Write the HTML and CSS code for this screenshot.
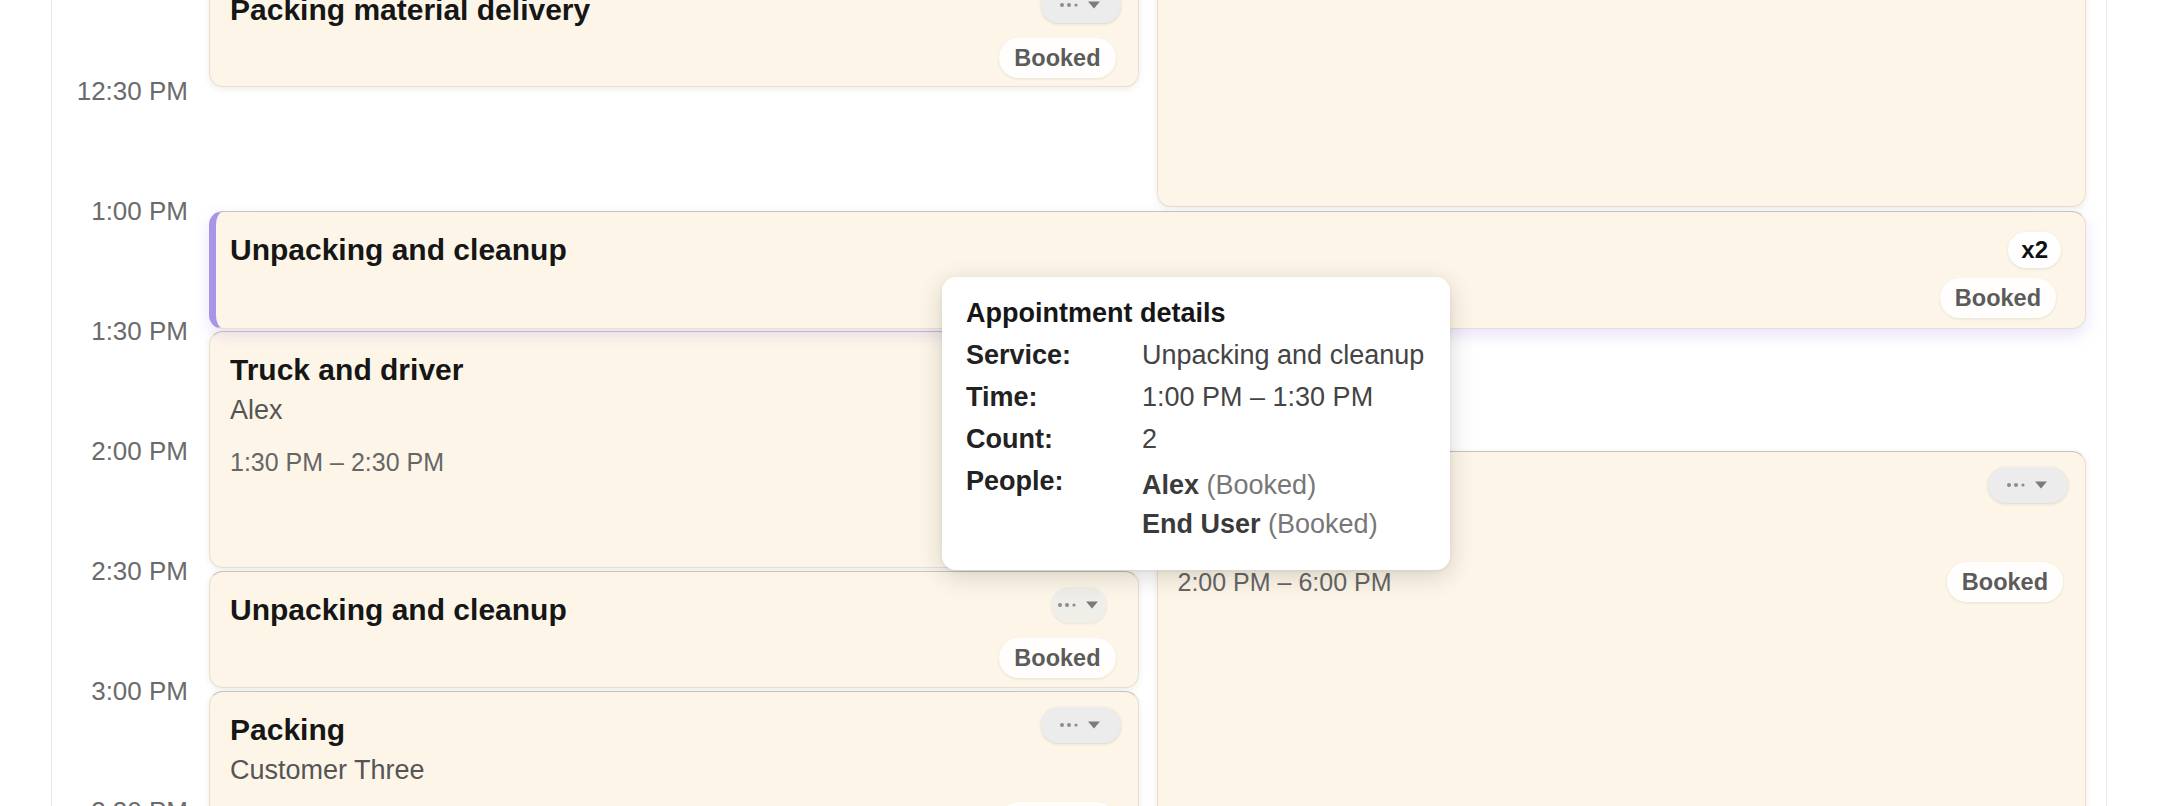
FILE: index.html
```html
<!DOCTYPE html>
<html lang="en">
<head>
<meta charset="utf-8">
<title>Day schedule</title>
<link rel="stylesheet" href="styles.css">
</head>
<body>
<div class="page">
  <div class="day">
    <div class="gutter">
      <div class="slot-label">11:30 AM</div>
      <div class="slot-label">12:00 PM</div>
      <div class="slot-label">12:30 PM</div>
      <div class="slot-label">1:00 PM</div>
      <div class="slot-label">1:30 PM</div>
      <div class="slot-label">2:00 PM</div>
      <div class="slot-label">2:30 PM</div>
      <div class="slot-label">3:00 PM</div>
      <div class="slot-label">3:30 PM</div>
    </div>
    <div class="events">
      <div class="event col-right" style="top:0px;height:356px"></div>

      <div class="event col-left" style="top:120px;height:116px">
        <div class="ev-head">
          <span class="ev-title">Packing material delivery</span>
          <button class="menu" type="button"><svg class="menu-icon" viewBox="0 0 44 12" width="44" height="12"><circle cx="3" cy="6" r="2"/><circle cx="10" cy="6" r="2"/><circle cx="17" cy="6" r="1.6"/><path class="caret" d="M29 2.5h12l-6 7z"/></svg></button>
        </div>
        <div class="ev-foot end"><span class="status">Booked</span></div>
      </div>

      <div class="event col-full accent" style="top:360px;height:118px">
        <div class="ev-head">
          <span class="ev-title">Unpacking and cleanup</span>
          <span class="count">x2</span>
        </div>
        <div class="ev-foot end"><span class="status">Booked</span></div>
      </div>

      <div class="event col-left" style="top:480px;height:237px">
        <div class="ev-head">
          <span class="ev-title">Truck and driver</span>
          <button class="menu" type="button"><svg class="menu-icon" viewBox="0 0 44 12" width="44" height="12"><circle cx="3" cy="6" r="2"/><circle cx="10" cy="6" r="2"/><circle cx="17" cy="6" r="1.6"/><path class="caret" d="M29 2.5h12l-6 7z"/></svg></button>
        </div>
        <div class="ev-sub">Alex</div>
        <div class="ev-foot"><span class="ev-time">1:30 PM – 2:30 PM</span><span class="status">Booked</span></div>
      </div>

      <div class="event col-right" style="top:600px;height:957px">
        <div class="ev-head end">
          <button class="menu" type="button"><svg class="menu-icon" viewBox="0 0 44 12" width="44" height="12"><circle cx="3" cy="6" r="2"/><circle cx="10" cy="6" r="2"/><circle cx="17" cy="6" r="1.6"/><path class="caret" d="M29 2.5h12l-6 7z"/></svg></button>
        </div>
        <div class="ev-sub-space"></div>
        <div class="ev-foot"><span class="ev-time">2:00 PM – 6:00 PM</span><span class="status">Booked</span></div>
      </div>

      <div class="event col-left" style="top:720px;height:117px">
        <div class="ev-head">
          <span class="ev-title">Unpacking and cleanup</span>
          <button class="menu faint" type="button"><svg class="menu-icon" viewBox="0 0 44 12" width="44" height="12"><circle cx="3" cy="6" r="2"/><circle cx="10" cy="6" r="2"/><circle cx="17" cy="6" r="1.6"/><path class="caret" d="M29 2.5h12l-6 7z"/></svg></button>
        </div>
        <div class="ev-foot end"><span class="status">Booked</span></div>
      </div>

      <div class="event col-left" style="top:840px;height:237px">
        <div class="ev-head">
          <span class="ev-title">Packing</span>
          <button class="menu" type="button"><svg class="menu-icon" viewBox="0 0 44 12" width="44" height="12"><circle cx="3" cy="6" r="2"/><circle cx="10" cy="6" r="2"/><circle cx="17" cy="6" r="1.6"/><path class="caret" d="M29 2.5h12l-6 7z"/></svg></button>
        </div>
        <div class="ev-sub">Customer Three</div>
        <div class="ev-foot end"><span class="status">Booked</span></div>
      </div>

      <div class="tooltip">
        <div class="tt-title">Appointment details</div>
        <dl class="tt-grid">
          <dt>Service:</dt><dd>Unpacking and cleanup</dd>
          <dt>Time:</dt><dd>1:00 PM – 1:30 PM</dd>
          <dt>Count:</dt><dd>2</dd>
          <dt>People:</dt>
          <dd class="people">
            <div><b>Alex</b> <span class="muted">(Booked)</span></div>
            <div><b>End User</b> <span class="muted">(Booked)</span></div>
          </dd>
        </dl>
      </div>
    </div>
  </div>
</div>
</body>
</html>
```

FILE: styles.css
```css
html, body {
  margin: 0;
  padding: 0;
  height: 806px;
  overflow: hidden;
  background: #ffffff;
  font-family: "Liberation Sans", Arial, sans-serif;
  color: #1a1a1a;
}

.page {
  box-sizing: border-box;
  margin-left: 51px;
  width: 2056px;
  height: 806px;
  border-left: 1px solid #e6e6e6;
  border-right: 1px solid #ececec;
  overflow: hidden;
  background: #ffffff;
}

.day {
  display: grid;
  grid-template-columns: 157px 1fr;
  padding-right: 20px;
  margin-top: -149px;
}

.gutter {
  display: flex;
  flex-direction: column;
  transform: translateY(-60px);
}

.slot-label {
  height: 120px;
  line-height: 120px;
  text-align: right;
  padding-right: 21px;
  font-size: 26px;
  color: #6b6b6b;
  white-space: nowrap;
}

.events {
  position: relative;
  height: 1200px;
}

.event {
  position: absolute;
  box-sizing: border-box;
  background: #fdf6e8;
  border: 1px solid rgba(120, 112, 96, 0.16);
  border-top-color: rgba(100, 94, 84, 0.34);
  border-radius: 14px;
  padding: 19px 17px 0 20px;
  box-shadow: 0 2px 7px rgba(70, 55, 30, 0.09);
  overflow: hidden;
}

.col-left { left: 0; width: calc(50% - 9px); }
.col-right { left: calc(50% + 9px); right: 0; }
.col-full { left: 0; right: 0; }

.accent {
  border-left: 7px solid #a895e6;
  padding-left: 14px;
  padding-right: 24px;
  box-shadow: 0 6px 16px rgba(140, 110, 225, 0.20);
  z-index: 2;
}

.ev-head {
  display: flex;
  justify-content: space-between;
  align-items: flex-start;
  min-height: 38px;
}

.ev-head.end { justify-content: flex-end; }

.ev-title {
  font-size: 30px;
  line-height: 38px;
  font-weight: 700;
  color: #161616;
  white-space: nowrap;
}

.menu {
  display: flex;
  align-items: center;
  justify-content: center;
  width: 80px;
  height: 36px;
  margin-top: -4px;
  padding: 0;
  border: none;
  border-radius: 18px;
  background: #ececec;
  box-shadow: 0 1px 3px rgba(0, 0, 0, 0.14);
}

.menu.faint {
  width: 56px;
  margin-right: 14px;
  background: #efeee9;
  box-shadow: 0 1px 2px rgba(0, 0, 0, 0.08);
}

.menu-icon { display: block; }
.menu-icon circle { fill: #8c8c8c; }
.menu-icon .caret { fill: #7b7b7b; }

.count {
  display: inline-flex;
  align-items: center;
  height: 36px;
  margin-top: 1px;
  padding: 0 13px;
  border-radius: 18px;
  background: #ffffff;
  box-shadow: 0 1px 3px rgba(0, 0, 0, 0.10);
  font-size: 24px;
  font-weight: 700;
  color: #111111;
}

.ev-sub {
  font-size: 27px;
  line-height: 42px;
  color: #555555;
}

.ev-sub-space {
  height: 42px;
}

.ev-foot {
  display: flex;
  justify-content: space-between;
  align-items: center;
  height: 40px;
  margin-top: 9px;
}

.ev-sub + .ev-foot,
.ev-sub-space + .ev-foot {
  margin-top: 11px;
}

.ev-foot.end { justify-content: flex-end; }

.ev-time {
  font-size: 25px;
  color: #666666;
}

.status {
  display: inline-flex;
  align-items: center;
  height: 40px;
  padding: 0 15px;
  margin-right: 5px;
  border-radius: 20px;
  background: rgba(255, 255, 255, 0.85);
  box-shadow: 0 1px 3px rgba(0, 0, 0, 0.09);
  font-size: 23.5px;
  font-weight: 700;
  color: #5b5b5b;
}

.tooltip {
  position: absolute;
  left: 733px;
  top: 426px;
  width: 508px;
  box-sizing: border-box;
  padding: 17px 24px 26px;
  background: #ffffff;
  border-radius: 14px;
  box-shadow: 0 6px 26px rgba(0, 0, 0, 0.16), 0 1px 4px rgba(0, 0, 0, 0.06);
  z-index: 10;
  font-size: 27px;
}

.tt-title {
  font-weight: 700;
  line-height: 38px;
  color: #161616;
}

.tt-grid {
  display: grid;
  grid-template-columns: 176px 1fr;
  margin: 2px 0 0;
  line-height: 42px;
}

.tt-grid dt {
  font-weight: 700;
  color: #222222;
}

.tt-grid dd {
  margin: 0;
  color: #444444;
  white-space: nowrap;
}

.tt-grid .people {
  padding-top: 6px;
  line-height: 39px;
}

.people b { color: #3a3a3a; }
.muted { color: #777777; }
```
